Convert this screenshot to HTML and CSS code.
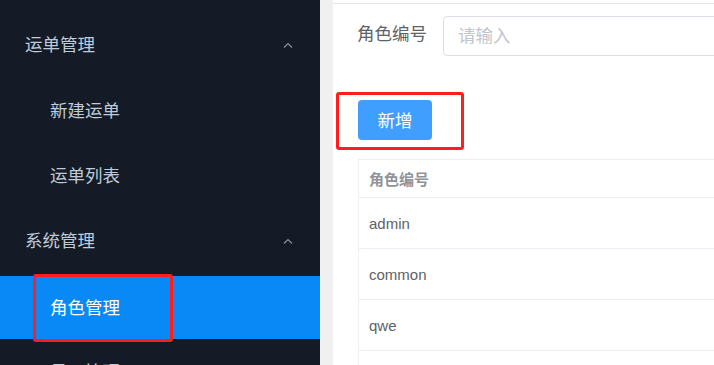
FILE: index.html
```html
<!DOCTYPE html>
<html lang="zh-CN">
<head>
    <meta charset="UTF-8">
    <meta name="viewport" content="width=device-width, initial-scale=1.0">
    <title>角色管理</title>
    <link rel="stylesheet" href="styles.css">
</head>
<body>
    <div class="layout">
        <aside class="sidebar">
            <div class="submenu-title">
                <span>运单管理</span>
                <svg class="arrow" width="10" height="6" viewBox="0 0 10 6"><polyline points="1,5.5 5,1.5 9,5.5" fill="none" stroke="#8b919b" stroke-width="1.2"/></svg>
            </div>
            <div class="menu-item">新建运单</div>
            <div class="menu-item">运单列表</div>
            <div class="submenu-title">
                <span>系统管理</span>
                <svg class="arrow" width="10" height="6" viewBox="0 0 10 6"><polyline points="1,5.5 5,1.5 9,5.5" fill="none" stroke="#8b919b" stroke-width="1.2"/></svg>
            </div>
            <div class="menu-item active">角色管理</div>
            <div class="menu-item">员工管理</div>
        </aside>

        <main class="main">
            <div class="panel">
                <div class="search-row">
                    <label class="search-label" for="roleCode">角色编号</label>
                    <input class="search-input" id="roleCode" type="text" placeholder="请输入">
                </div>

                <div class="toolbar">
                    <div class="mark-box">
                        <button type="button" class="btn-primary">新增</button>
                    </div>
                </div>

                <table class="role-table">
                    <tr>
                        <th>角色编号</th>
                    </tr>
                    <tr>
                        <td>admin</td>
                    </tr>
                    <tr>
                        <td>common</td>
                    </tr>
                    <tr>
                        <td>qwe</td>
                    </tr>
                    <tr>
                        <td>&nbsp;</td>
                    </tr>
                </table>
            </div>
        </main>
    </div>
</body>
</html>
```

FILE: styles.css
```css
body {
    margin: 0;
    font-family: "Liberation Sans", "Noto Sans CJK SC", sans-serif;
    overflow: hidden;
}
.layout {
    display: flex;
    width: 714px;
    height: 365px;
    overflow: hidden;
}
.sidebar {
    width: 320px;
    flex: none;
    padding-top: 12px;
    background-color: #151b26;
    color: #bfcbd9;
    font-size: 17.5px;
}
.submenu-title {
    display: flex;
    align-items: center;
    justify-content: space-between;
    box-sizing: border-box;
    height: 66px;
    padding: 0 27px 3px 25px;
}
.arrow {
    display: block;
    margin-top: 3px;
}
.menu-item {
    display: flex;
    align-items: center;
    box-sizing: border-box;
    height: 65px;
    padding: 0 0 3px 50px;
}
.menu-item.active {
    position: relative;
    height: 63px;
    margin-top: 2px;
    background-color: #0889f5;
    color: #fff;
}
.menu-item.active::after {
    content: "";
    position: absolute;
    left: 33px;
    top: -2px;
    width: 134px;
    height: 62px;
    border: 3px solid #ff1d1d;
    border-radius: 3px;
}
.main {
    flex: 1;
    min-width: 0;
    padding-left: 13px;
    background-color: #f0f0f0;
}
.panel {
    height: 100%;
    padding-top: 3px;
    background-color: #fff;
}
.search-row {
    display: flex;
    align-items: center;
    padding: 12px 0 0 24px;
    border-top: 1px solid #e6e6e6;
}
.search-label {
    flex: none;
    padding-right: 16px;
    color: #606266;
    font-size: 17.5px;
    line-height: 1;
    padding-bottom: 2px;
}
.search-input {
    flex: none;
    width: 320px;
    height: 40px;
    box-sizing: border-box;
    padding: 0 14px;
    border: 1px solid #dcdfe6;
    border-radius: 4px;
    font-family: inherit;
    font-size: 17.5px;
    color: #606266;
}
.search-input::placeholder {
    color: #c0c4cc;
}
.toolbar {
    display: flex;
    padding: 36px 0 9px 3px;
}
.mark-box {
    display: flex;
    padding: 5px 29px 7px 19px;
    border: 3px solid #ff1d1d;
    border-radius: 3px;
}
.btn-primary {
    width: 74px;
    height: 40px;
    padding: 0 0 2px;
    border: none;
    border-radius: 4px;
    background-color: #409eff;
    color: #fff;
    font-family: inherit;
    font-size: 17.5px;
}
.role-table {
    width: calc(100% - 25px);
    margin-left: 25px;
    border-collapse: collapse;
    font-size: 15px;
}
.role-table th,
.role-table td {
    padding: 0 10px;
    text-align: left;
    border-top: 1px solid #ebeef5;
    border-left: 1px solid #ebeef5;
}
.role-table th {
    height: 37px;
    color: #909399;
    font-weight: bold;
}
.role-table td {
    height: 50px;
    color: #606266;
}
```
